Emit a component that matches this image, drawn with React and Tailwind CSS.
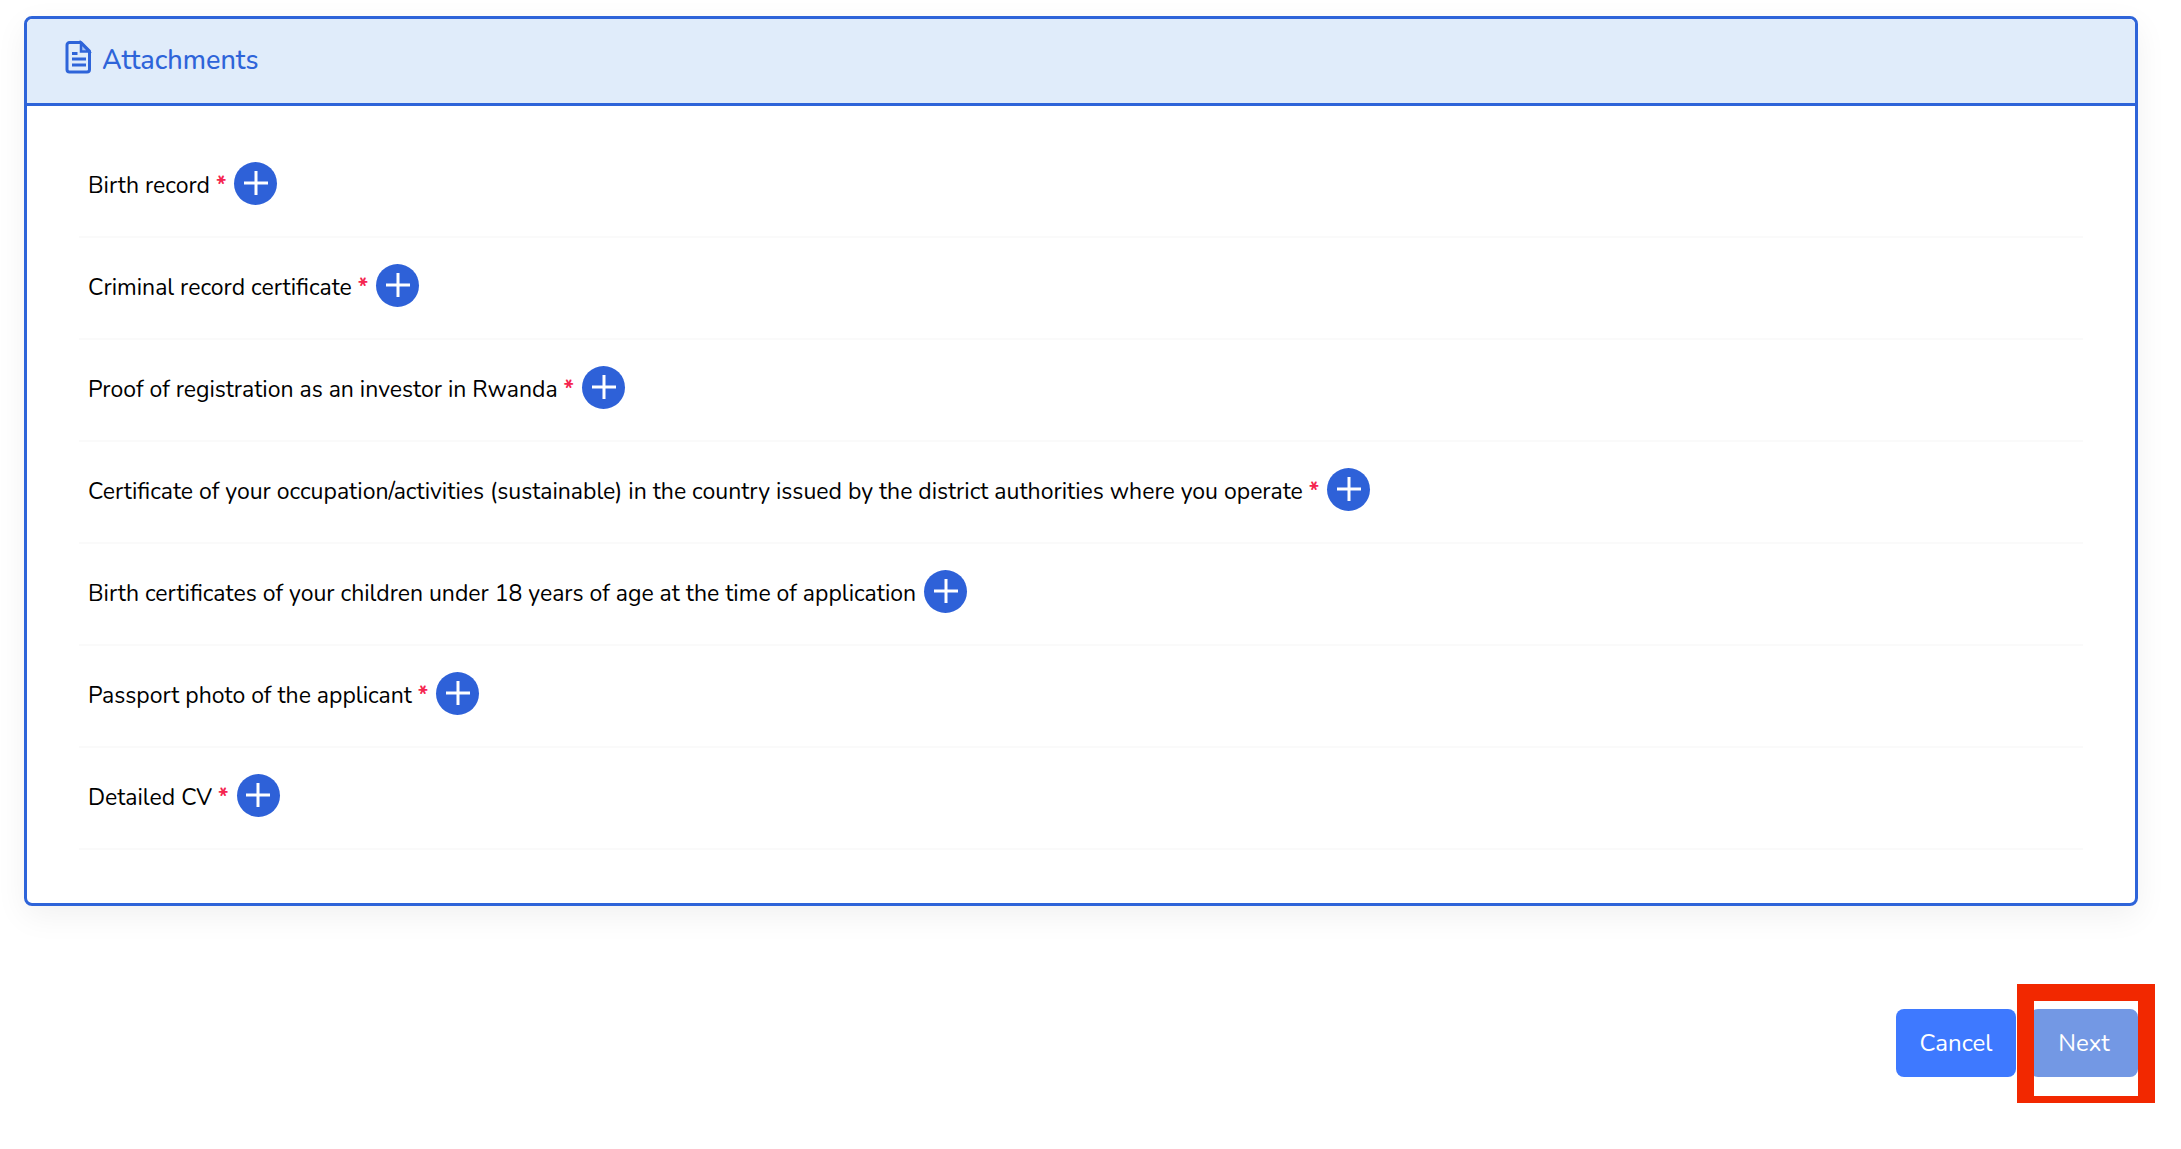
import React from 'react';

const attachments = [
  { id: 'birth-record', label: 'Birth record', required: true },
  { id: 'criminal-record', label: 'Criminal record certificate', required: true },
  { id: 'investor-proof', label: 'Proof of registration as an investor in Rwanda', required: true },
  {
    id: 'occupation',
    label:
      'Certificate of your occupation/activities (sustainable) in the country issued by the district authorities where you operate',
    required: true,
  },
  {
    id: 'children',
    label: 'Birth certificates of your children under 18 years of age at the time of application',
    required: false,
  },
  { id: 'passport-photo', label: 'Passport photo of the applicant', required: true },
  { id: 'cv', label: 'Detailed CV', required: true },
];

const FileIcon = () => (
  <svg className="w-7 h-9 mb-2" viewBox="0 0 28 36" fill="none" stroke="currentColor" strokeWidth="3" aria-hidden="true">
    <path d="M5.500 3.500H17L25.500 12V30.500a2.500 2.500 0 0 1-2.500 2.500H5.500A2.500 2.500 0 0 1 3 30.500V6a2.500 2.500 0 0 1 2.500-2.500z" strokeLinejoin="round" />
    <path d="M17 4v8.500H25z" fill="currentColor" fillOpacity="0.3" strokeWidth="2.500" />
    <path d="M8 14.500h5.500M8 20h14M8 26h14" />
  </svg>
);

const AttachmentRow = ({ id, label, required }) => (
  <li className="flex items-center gap-2 h-[102px] px-[9px] pb-1.5 border-b-2 border-[#fafafa]">
    <span id={id} className="pt-1.5 text-[23px]">
      {label}
      {required && <span className="ml-1.5 font-bold text-[#f5254f]">*</span>}
    </span>
    <button
      type="button"
      aria-label={`Add ${label}`}
      className="flex items-center justify-center shrink-0 w-[43px] h-[43px] rounded-full bg-[#2e61d8] text-white"
    >
      <svg className="w-6 h-6" viewBox="0 0 24 24" stroke="currentColor" strokeWidth="3" aria-hidden="true">
        <path d="M12 0v24M0 12h24" />
      </svg>
    </button>
  </li>
);

const App = () => {
  return (
    <main className="pt-4 pb-12 pl-6 pr-[43px] bg-white text-black text-2xl leading-8 font-['Nunito','Lato',sans-serif]">
      <section className="rounded-lg border-3 border-[#2e64d9] shadow-[0_10px_32px_rgba(0,0,0,0.06)]">
        <header className="flex items-center gap-2.5 h-[87px] pl-[37px] rounded-t-md border-b-3 border-[#2e64d9] bg-[#e0ecfa] text-[#2e64d9]">
          <FileIcon />
          <h2 className="text-[27px] font-medium">Attachments</h2>
        </header>
        <ul className="pt-[30px] pb-[53px] px-[52px]">
          {attachments.map((item) => (
            <AttachmentRow key={item.id} {...item} />
          ))}
        </ul>
      </section>

      <div className="flex justify-end gap-[14px] mt-[103px]">
        <button type="button" className="w-[120px] h-[68px] rounded-lg bg-[#3e79ff] text-white">
          Cancel
        </button>
        <div className="relative">
          <button type="button" className="w-[108px] h-[68px] rounded-lg bg-[#7398e4] text-white">
            Next
          </button>
          {/* Highlight frame over the next step */}
          <div className="absolute -top-[25px] -bottom-[26px] -left-[13px] -right-[17px] border-[17px] border-b-[7px] border-[#f22800] pointer-events-none" />
        </div>
      </div>
    </main>
  );
};

export default App;
